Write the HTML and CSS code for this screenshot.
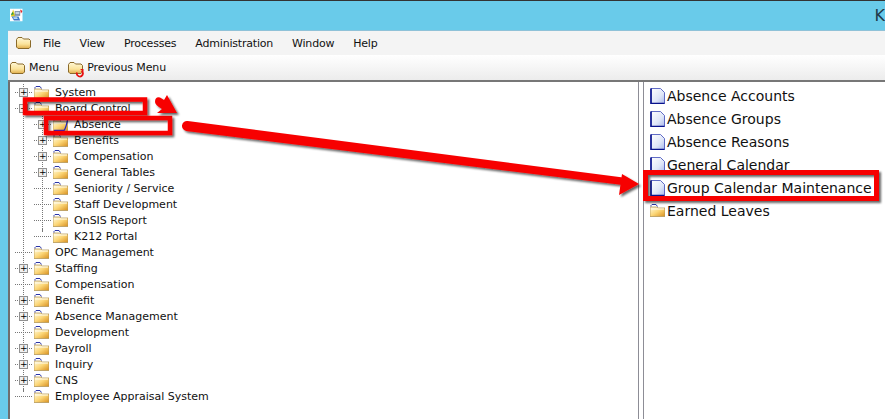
FILE: index.html
```html
<!DOCTYPE html>
<html>
<head>
	<meta charset="utf-8">
	<title>Board Control</title>
	<link rel="stylesheet" href="styles.css">
</head>
<body>
	<svg class="defs" width="0" height="0">
		<defs>
			<linearGradient id="gold" x1="0" y1="0" x2="1" y2="1">
				<stop offset="0" stop-color="#fffbe0"/>
				<stop offset="0.5" stop-color="#fcd778"/>
				<stop offset="1" stop-color="#d88f1e"/>
			</linearGradient>
			<linearGradient id="pale" x1="0" y1="0" x2="0" y2="1">
				<stop offset="0" stop-color="#fff8d8"/>
				<stop offset="0.6" stop-color="#fbe39a"/>
				<stop offset="1" stop-color="#e0ad4a"/>
			</linearGradient>
			<linearGradient id="sheet" x1="0" y1="0" x2="1" y2="1">
				<stop offset="0" stop-color="#ffffff"/>
				<stop offset="0.6" stop-color="#dfe6f8"/>
				<stop offset="1" stop-color="#a9b8ea"/>
			</linearGradient>
			<symbol id="folder" viewBox="0 0 15 13">
				<path d="M0 12.5V3H7L8 4H15V12.5Z" fill="url(#gold)" stroke="#b4985a" stroke-width=".8"/>
				<path d="M1 2.5V1.5L2 .5H6L7.5 2.5" fill="none" stroke="#2a35a8"/>
				<path d="M1 5H14" stroke="#fffdf0"/>
			</symbol>
			<symbol id="menufolder" viewBox="0 0 15 12">
				<path d="M.5 10V2.5L2 .5H6L7.5 2H13L14.5 3.5V10L13 11.5H2Z" fill="url(#pale)" stroke="#8a6a2a"/>
			</symbol>
			<symbol id="page" viewBox="0 0 15 16">
				<path d="M1 15.5V.5H10.5L14.5 4.5V15.5Z" fill="url(#sheet)" stroke="#3a48b8" stroke-width=".8"/>
				<path d="M1 .5V15.5H14.5" fill="none" stroke="#08128c" stroke-width="1.6"/>
			</symbol>
		</defs>
	</svg>

	<div class="titlebar">
		<svg class="appicon" width="16" height="16" viewBox="0 0 16 16">
			<rect width="16" height="16" fill="#fff"/>
			<path d="M1 10L4 1L7 10Z" fill="#e6c81e"/>
			<path d="M6 3H13V9H6Z" fill="#76889e"/>
			<path d="M7 4H12V7H7Z" fill="#c4d4e2"/>
			<path d="M13 1L16 3L14 6Z" fill="#e02020"/>
			<path d="M2 10H11L13 15H5Z" fill="#3a78c8"/>
			<path d="M4 11H9L10 13H5Z" fill="#bcd8f0"/>
			<path d="M3 4L5 7L1 8Z" fill="#2a9a3a"/>
		</svg>
		<span class="apptitle">K</span>
	</div>
	<div class="content">
		<div class="menubar">
			<svg class="menuicon" width="15" height="12"><use href="#menufolder"/></svg>
			<span class="menuitem">File</span>
			<span class="menuitem">View</span>
			<span class="menuitem">Processes</span>
			<span class="menuitem">Administration</span>
			<span class="menuitem">Window</span>
			<span class="menuitem">Help</span>
		</div>
		<div class="toolbar">
			<span class="tool">
				<svg width="15" height="12"><use href="#menufolder"/></svg>
				Menu
			</span>
			<span class="tool">
				<svg class="backicon" width="16" height="16" viewBox="0 0 16 16">
					<use href="#menufolder" width="15" height="12"/>
					<path d="M9 10.500A3 3 0 1 0 13.500 9" fill="none" stroke="#e81010" stroke-width="1.800"/>
					<path d="M12 7H15.500V10Z" fill="#e81010"/>
				</svg>
				Previous Menu
			</span>
		</div>
		<div class="panes">
			<div class="tree">
				<div class="row"><i class="cell tee"><b class="box">+</b></i><svg class="ficon"><use href="#folder"/></svg>System</div>
				<div class="row"><i class="cell tee"><b class="box">&minus;</b></i><svg class="ficon"><use href="#folder"/></svg>Board Control</div>
				<div class="row"><i class="cell pipe"></i><i class="cell tee"><b class="box">+</b></i>
					<svg class="ficon" viewBox="0 0 15 13">
						<use href="#folder" width="15" height="13"/>
						<path d="M1 12.500H11Q13 10 14.500 2" fill="none" stroke="#1a22c8" stroke-width="1.300"/>
					</svg>Absence</div>
				<div class="row"><i class="cell pipe"></i><i class="cell tee"><b class="box">+</b></i><svg class="ficon"><use href="#folder"/></svg>Benefits</div>
				<div class="row"><i class="cell pipe"></i><i class="cell tee"><b class="box">+</b></i><svg class="ficon"><use href="#folder"/></svg>Compensation</div>
				<div class="row"><i class="cell pipe"></i><i class="cell tee"><b class="box">+</b></i><svg class="ficon"><use href="#folder"/></svg>General Tables</div>
				<div class="row"><i class="cell pipe"></i><i class="cell tee"></i><svg class="ficon"><use href="#folder"/></svg>Seniority / Service</div>
				<div class="row"><i class="cell pipe"></i><i class="cell tee"></i><svg class="ficon"><use href="#folder"/></svg>Staff Development</div>
				<div class="row"><i class="cell pipe"></i><i class="cell tee"></i><svg class="ficon"><use href="#folder"/></svg>OnSIS Report</div>
				<div class="row"><i class="cell pipe"></i><i class="cell end"></i><svg class="ficon"><use href="#folder"/></svg>K212 Portal</div>
				<div class="row"><i class="cell tee"></i><svg class="ficon"><use href="#folder"/></svg>OPC Management</div>
				<div class="row"><i class="cell tee"><b class="box">+</b></i><svg class="ficon"><use href="#folder"/></svg>Staffing</div>
				<div class="row"><i class="cell tee"></i><svg class="ficon"><use href="#folder"/></svg>Compensation</div>
				<div class="row"><i class="cell tee"><b class="box">+</b></i><svg class="ficon"><use href="#folder"/></svg>Benefit</div>
				<div class="row"><i class="cell tee"><b class="box">+</b></i><svg class="ficon"><use href="#folder"/></svg>Absence Management</div>
				<div class="row"><i class="cell tee"></i><svg class="ficon"><use href="#folder"/></svg>Development</div>
				<div class="row"><i class="cell tee"><b class="box">+</b></i><svg class="ficon"><use href="#folder"/></svg>Payroll</div>
				<div class="row"><i class="cell tee"><b class="box">+</b></i><svg class="ficon"><use href="#folder"/></svg>Inquiry</div>
				<div class="row"><i class="cell tee"><b class="box">+</b></i><svg class="ficon"><use href="#folder"/></svg>CNS</div>
				<div class="row"><i class="cell end"></i><svg class="ficon"><use href="#folder"/></svg>Employee Appraisal System</div>
			</div>
			<div class="splitter"></div>
			<div class="list">
				<div class="item"><svg class="picon"><use href="#page"/></svg>Absence Accounts</div>
				<div class="item"><svg class="picon"><use href="#page"/></svg>Absence Groups</div>
				<div class="item"><svg class="picon"><use href="#page"/></svg>Absence Reasons</div>
				<div class="item"><svg class="picon"><use href="#page"/></svg>General Calendar</div>
				<div class="item"><svg class="picon"><use href="#page"/></svg>Group Calendar Maintenance</div>
				<div class="item"><svg class="picon small"><use href="#folder"/></svg>Earned Leaves</div>
			</div>
		</div>
	</div>

	<!-- red annotations drawn on top of the screenshot -->
	<svg class="marks" width="885" height="419" viewBox="0 0 885 419">
		<defs>
			<filter id="shade" x="-10%" y="-10%" width="120%" height="130%">
				<feDropShadow dx="2" dy="2" stdDeviation="1.200" flood-color="#000" flood-opacity="0.6"/>
			</filter>
		</defs>
		<g filter="url(#shade)" fill="none" stroke="#f70000" stroke-width="4.500">
			<rect x="25" y="99.500" width="120" height="13.500"/>
			<rect x="46" y="118" width="124" height="15"/>
			<rect x="645.500" y="172.500" width="231" height="26" stroke-width="5"/>
		</g>
		<g filter="url(#shade)" fill="#f70000">
			<path d="M187.600 121L623 177.500V185L186.400 131A5 5 0 0 1 187.600 121Z"/>
			<path d="M622 174L639 184L619 195Z"/>
			<path d="M177 113L167 95L164 100L160 97.500Q155 96.500 155 102Q155 105 162 109L157 113Z"/>
		</g>
	</svg>
</body>
</html>
```

FILE: styles.css
```css
body{
	margin: 0;
	width: 885px;
	height: 419px;
	overflow: hidden;
	position: relative;
	background-color: #69cbea;
	font-family: "DejaVu Sans", sans-serif;
	font-size: 11px;
	color: #111;
}
.defs{
	display: block;
	height: 0;
}
.titlebar{
	display: flex;
	align-items: flex-start;
	height: 30px;
	border-top: 1px solid #333;
	box-sizing: border-box;
	overflow: hidden;
}
.appicon{
	margin: 6px 0 0 10px;
}
.apptitle{
	margin-left: 852px;
	font-size: 16px;
	line-height: 30px;
	color: #1d3a4a;
}
.content{
	display: flex;
	flex-direction: column;
	height: 389px;
	margin-left: 8px;
	border-top: 1px solid #8fc2d8;
	box-sizing: border-box;
}
.menubar{
	display: flex;
	align-items: center;
	height: 24px;
	padding-left: 8px;
	background-color: #f4f4f4;
}
.menuicon{
	margin-right: 12px;
}
.menuitem{
	margin-right: 19px;
	letter-spacing: -0.2px;
}
.toolbar{
	display: flex;
	align-items: center;
	gap: 9px;
	height: 25px;
	padding-left: 2px;
	background: linear-gradient(#fff, #ececec);
	border-bottom: 2px solid #777;
	box-sizing: content-box;
}
.tool{
	display: flex;
	align-items: center;
	gap: 4px;
}
.tool:last-child{
	letter-spacing: -0.1px;
}
.backicon{
	margin-right: -1px;
	margin-bottom: -4px;
}
.panes{
	display: flex;
	flex: 1;
	min-height: 0;
	background-color: #fff;
	border-left: 2px solid #6f6f6f;
}
.tree{
	flex: none;
	width: 624px;
	padding: 2px 0 0 4px;
}
.row{
	display: flex;
	align-items: center;
	height: 16px;
	white-space: nowrap;
}
.cell{
	display: flex;
	align-items: center;
	flex: none;
	width: 19px;
	height: 16px;
	padding-left: 5px;
	box-sizing: border-box;
}
.pipe{
	background-image: linear-gradient(#777 50%, transparent 50%);
	background-size: 1px 2px;
	background-position: 9px 0;
	background-repeat: repeat-y;
}
.tee{
	background-image: linear-gradient(#777 50%, transparent 50%), linear-gradient(90deg, #777 50%, transparent 50%);
	background-size: 1px 2px, 2px 1px;
	background-position: 9px 0, 9px 8px;
	background-repeat: repeat-y, repeat-x;
}
.end{
	background-image: linear-gradient(#777 50%, transparent 50%), linear-gradient(90deg, #777 50%, transparent 50%);
	background-size: 1px 8px, 2px 1px;
	background-position: 9px 0, 9px 8px;
	background-repeat: no-repeat, repeat-x;
}
.box{
	display: block;
	width: 9px;
	height: 9px;
	border: 1px solid #919191;
	box-sizing: border-box;
	background-color: #f0f0f0;
	font: normal 9px/7px "DejaVu Sans", sans-serif;
	text-align: center;
	color: #000;
}
.ficon{
	flex: none;
	width: 15px;
	height: 13px;
	margin: 0 6px 0 1px;
}
.splitter{
	flex: none;
	width: 6px;
	border-left: 1px solid #8d8d96;
	border-right: 1px solid #8d8d96;
	box-sizing: border-box;
}
.list{
	flex: 1;
	padding: 2px 0 0 6px;
	font-size: 14px;
}
.item{
	display: flex;
	align-items: center;
	height: 23px;
	white-space: nowrap;
}
.picon{
	flex: none;
	width: 15px;
	height: 16px;
	margin-right: 2px;
}
.picon.small{
	height: 13px;
}
.marks{
	position: absolute;
	left: 0;
	top: 0;
}
```
